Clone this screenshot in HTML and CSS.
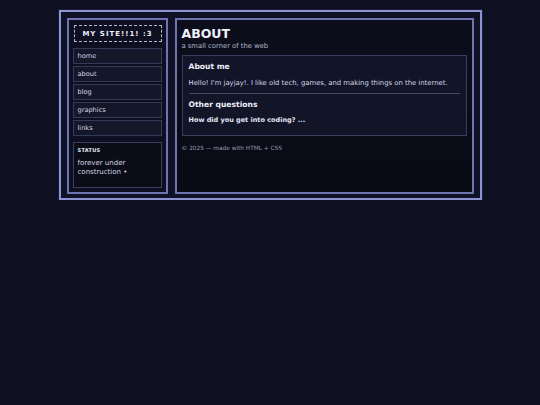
FILE: index.html
```html
<!DOCTYPE html>
<html lang="en">
<head>
<meta charset="utf-8">
<title>my site</title>
<link rel="stylesheet" href="styles.css">
</head>
<body>
<div class="frame">
  <aside class="sidebar">
    <div class="site-title">MY SITE!!1! :3</div>
    <nav class="nav">
      <a class="nav-item" href="#">home</a>
      <a class="nav-item" href="#">about</a>
      <a class="nav-item" href="#">blog</a>
      <a class="nav-item" href="#">graphics</a>
      <a class="nav-item" href="#">links</a>
    </nav>
    <div class="status">
      <div class="status-label">STATUS</div>
      <div class="status-text">forever under construction •</div>
    </div>
  </aside>
  <main class="main">
    <h1 class="page-title">ABOUT</h1>
    <p class="subtitle">a small corner of the web</p>
    <section class="card">
      <h2 class="card-heading">About me</h2>
      <p class="card-text">Hello! I'm jayjay!. I like old tech, games, and making things on the internet.</p>
      <hr class="divider">
      <h2 class="card-heading">Other questions</h2>
      <p class="question">How did you get into coding? ...</p>
    </section>
    <footer class="footer">© 2025 — made with HTML + CSS</footer>
  </main>
</div>
</body>
</html>
```
FILE: styles.css
```css
* { box-sizing: border-box; }
html, body { margin: 0; padding: 0; }
body {
  background: #0e1022;
  font-family: "DejaVu Sans", Verdana, sans-serif;
  color: #d6d8e8;
}
.frame {
  width: 423px;
  margin: 10px auto 0;
  border: 2px solid #8c92d2;
  background: #0f1124;
  padding: 6px;
  display: grid;
  grid-template-columns: 101px 299px;
  column-gap: 7px;
  height: 190px;
  box-shadow: 0 0 0 1px #1a1d38;
}
.sidebar {
  border: 2px solid #6d74b2;
  background: #0e1021;
  padding: 5px 4px 4px;
  display: flex;
  flex-direction: column;
}
.site-title {
  border: 1px dashed #b4b8d6;
  height: 17px;
  margin: 0 0 6px 1px;
  display: flex;
  align-items: center;
  justify-content: center;
  font-weight: bold;
  font-size: 7px;
  letter-spacing: 1px;
  color: #eceef8;
}
.nav {
  display: flex;
  flex-direction: column;
  gap: 2px;
}
.nav-item {
  display: flex;
  align-items: center;
  height: 16px;
  padding-left: 4px;
  border: 1px solid #353958;
  background: #14162a;
  color: #d4d6e2;
  font-size: 6.6px;
  text-decoration: none;
}
.status {
  margin-top: 6px;
  height: 46px;
  border: 1px solid #3a3e60;
  background: #0a0c18;
  padding: 4px 4px;
}
.status-label {
  font-size: 5px;
  font-weight: bold;
  letter-spacing: 0.3px;
  color: #eceef8;
  margin-bottom: 6px;
}
.status-text {
  font-size: 7px;
  line-height: 9px;
  color: #d4d6e2;
}
.main {
  border: 2px solid #6d74b2;
  background: linear-gradient(#0c0e1c, #080a14);
  padding: 5px 5px;
}
.page-title {
  margin: 0;
  font-size: 12.5px;
  line-height: 17px;
  font-weight: bold;
  color: #f0f1fa;
}
.subtitle {
  margin: 0;
  font-size: 6.8px;
  line-height: 9px;
  color: #b4b7cc;
}
.card {
  margin-top: 4px;
  border: 1px solid #3a3d5e;
  background: #121428;
  padding: 5px 6px 6px;
  height: 81px;
}
.card-heading {
  margin: 0;
  font-size: 7.6px;
  line-height: 11px;
  font-weight: bold;
  color: #eceef8;
}
.card-text {
  margin: 7px 0 0;
  font-size: 6.85px;
  line-height: 9px;
  color: #d6d8e8;
}
.divider {
  border: 0;
  border-top: 1px solid #45486c;
  margin: 5px 0 5px;
}
.question {
  margin: 6px 0 0;
  font-size: 6.5px;
  line-height: 9px;
  font-weight: bold;
  color: #e4e6f2;
}
.footer {
  margin-top: 8px;
  font-size: 5.8px;
  line-height: 9px;
  color: #9a9db4;
}
```
